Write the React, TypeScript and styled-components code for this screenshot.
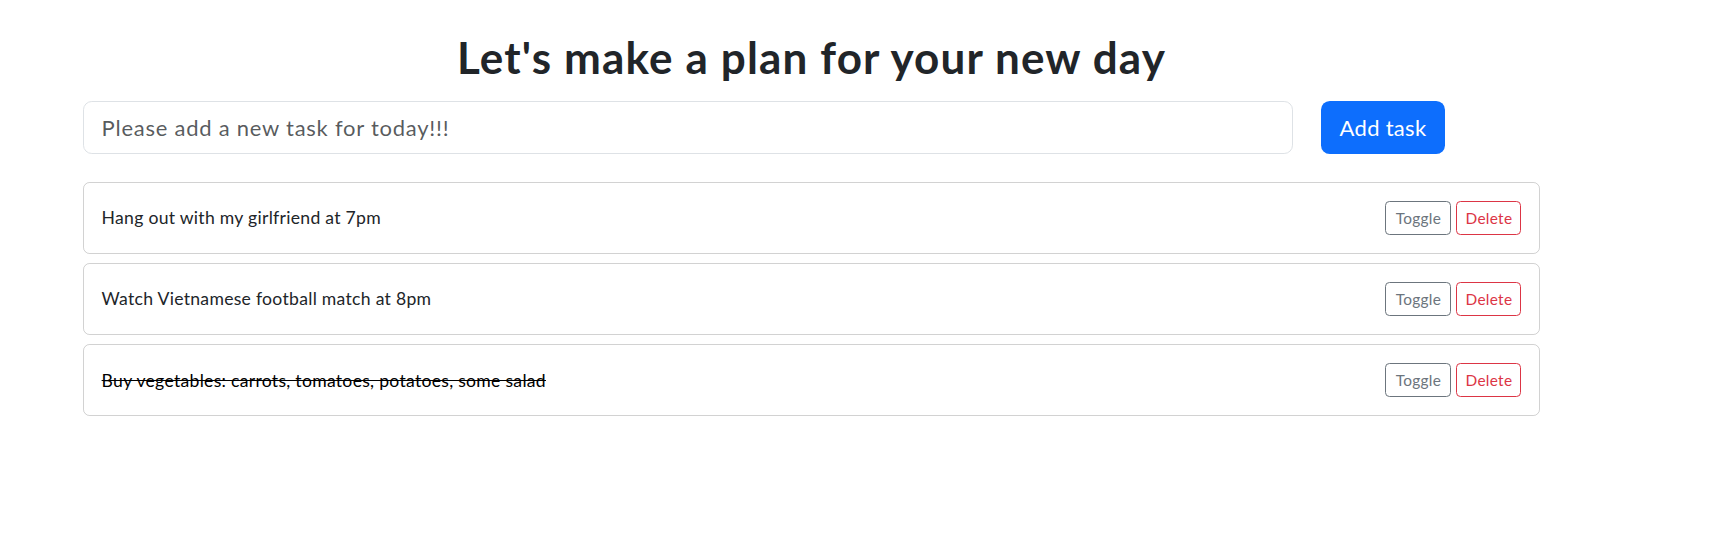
import React from "react";
import styled, { createGlobalStyle } from "styled-components";

const GlobalStyle = createGlobalStyle`
  *, *::before, *::after { box-sizing: border-box; }
  body {
    margin: 0;
    background: #fff;
    color: #212529;
    font-family: Lato, "Noto Sans", sans-serif;
  }
`;

const Page = styled.main`
  width: 1457px;
  margin-left: 83px;
  display: flex;
  flex-direction: column;
`;

const Title = styled.h1`
  margin: 31px 0 17px;
  text-align: center;
  font-size: 44px;
  line-height: 52.8px;
  font-weight: 700;
  letter-spacing: 1.15px;
  color: #212529;
`;

const FormRow = styled.form`
  display: flex;
  gap: 28px;
  margin-bottom: 28px;
`;

const TaskInput = styled.input`
  width: 1210px;
  height: 53px;
  padding: 0 17.6px;
  border: 1px solid #dee2e6;
  border-radius: 8.8px;
  font-family: inherit;
  font-size: 22px;
  letter-spacing: 0.75px;
  color: #212529;
  outline: none;
  &::placeholder { color: rgba(33, 37, 41, 0.75); }
`;

const AddButton = styled.button`
  width: 124px;
  height: 53px;
  border: none;
  border-radius: 8.8px;
  background: #0d6efd;
  color: #fff;
  font-family: inherit;
  font-size: 22px;
  letter-spacing: 0.3px;
  cursor: pointer;
`;

const TaskList = styled.ul`
  list-style: none;
  margin: 0;
  padding: 0;
  display: flex;
  flex-direction: column;
  gap: 9.2px;
`;

const TaskCard = styled.li`
  height: 72px;
  padding: 0 17.6px;
  border: 1px solid rgba(0, 0, 0, 0.175);
  border-radius: 6.6px;
  display: flex;
  align-items: center;
  justify-content: space-between;
`;

const TaskText = styled.span<{ $done?: boolean }>`
  font-size: 17.6px;
  letter-spacing: 0.28px;
  color: ${(p) => (p.$done ? "#000" : "#212529")};
  text-decoration: ${(p) => (p.$done ? "line-through" : "none")};
`;

const Actions = styled.div`
  display: flex;
  gap: 5px;
`;

const OutlineButton = styled.button<{ $tone: string; $width: number }>`
  width: ${(p) => p.$width}px;
  height: 34px;
  padding: 0;
  border: 1px solid ${(p) => p.$tone};
  border-radius: 4.4px;
  background: transparent;
  color: ${(p) => p.$tone};
  font-family: inherit;
  font-size: 15.4px;
  letter-spacing: 0.3px;
  cursor: pointer;
`;

const tasks = [
  { text: "Hang out with my girlfriend at 7pm", done: false },
  { text: "Watch Vietnamese football match at 8pm", done: false },
  { text: "Buy vegetables: carrots, tomatoes, potatoes, some salad", done: true },
];

export default function App() {
  return (
    <>
      <GlobalStyle />
      <Page>
        <Title>Let's make a plan for your new day</Title>
        <FormRow onSubmit={(e) => e.preventDefault()}>
          <TaskInput placeholder="Please add a new task for today!!!" />
          <AddButton type="submit">Add task</AddButton>
        </FormRow>
        <TaskList>
          {tasks.map((t) => (
            <TaskCard key={t.text}>
              <TaskText $done={t.done}>{t.text}</TaskText>
              <Actions>
                <OutlineButton $tone="#6c757d" $width={66}>Toggle</OutlineButton>
                <OutlineButton $tone="#dc3545" $width={65}>Delete</OutlineButton>
              </Actions>
            </TaskCard>
          ))}
        </TaskList>
      </Page>
    </>
  );
}
